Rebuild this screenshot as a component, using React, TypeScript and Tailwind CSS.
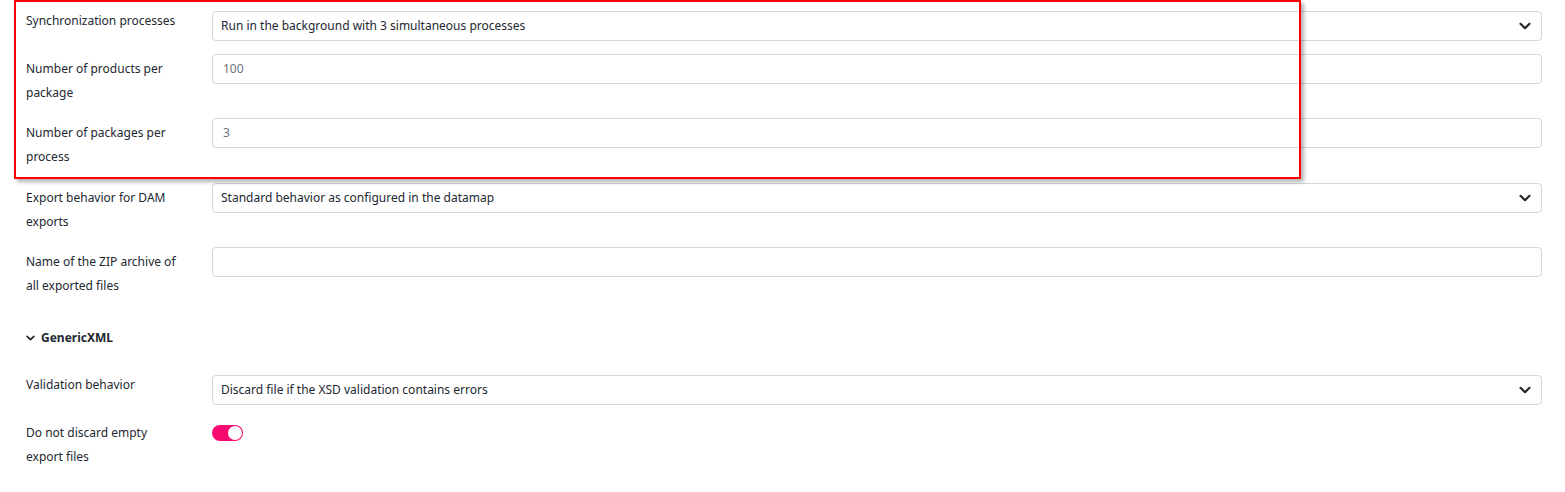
import React from 'react';

const font = { fontFamily: '"Noto Sans", "Open Sans", sans-serif' };

const Chevron: React.FC<{ className?: string }> = ({ className }) => (
  <svg className={className} viewBox="0 0 12 8" fill="none" stroke="currentColor" strokeWidth="2.2" strokeLinecap="round" strokeLinejoin="round">
    <path d="M1.5 1.8 6 6.2l4.5-4.4" />
  </svg>
);

const SelectBox: React.FC<{ value: string }> = ({ value }) => (
  <div className="flex h-[30px] flex-1 items-center justify-between rounded-[4px] border border-[#d4d6d9] bg-white pl-[8px] pr-[10px] text-[12px] text-[#222831]">
    <span>{value}</span>
    <Chevron className="h-[8px] w-[12px] text-[#23272b]" />
  </div>
);

const TextBox: React.FC<{ value?: string }> = ({ value }) => (
  <div className="flex h-[30px] flex-1 items-center rounded-[4px] border border-[#d4d6d9] bg-white pl-[10px] text-[12px] text-[#6b7178]">
    {value}
  </div>
);

const Toggle: React.FC = () => (
  <div className="flex h-[16px] w-[31px] items-center justify-end rounded-full bg-[#f7096f] pr-[1px]">
    <div className="h-[14px] w-[14px] rounded-full bg-white" />
  </div>
);

const Row: React.FC<{ label: React.ReactNode; single?: boolean; className?: string; children: React.ReactNode }> = ({ label, single, className, children }) => (
  <div className={`flex items-start ${className ?? ''}`}>
    <div className={`w-[186px] shrink-0 pr-4 text-[12px] leading-[24px] text-[#222831] ${single ? '-mt-[2px]' : 'pt-[3px]'}`}>{label}</div>
    {children}
  </div>
);

export default function App() {
  return (
    <div className="relative h-[492px] w-full overflow-hidden bg-white" style={font}>
      <div className="pl-[26px] pr-[23px] pt-[11px]">
        <Row label="Synchronization processes" single className="mb-[13px]">
          <SelectBox value="Run in the background with 3 simultaneous processes" />
        </Row>
        <Row label={<>Number of products per<br />package</>} className="mb-[13px]">
          <TextBox value="100" />
        </Row>
        <Row label={<>Number of packages per<br />process</>} className="mb-[14px]">
          <TextBox value="3" />
        </Row>
        <Row label={<>Export behavior for DAM<br />exports</>} className="mb-[13px]">
          <SelectBox value="Standard behavior as configured in the datamap" />
        </Row>
        <Row label={<>Name of the ZIP archive of<br />all exported files</>}>
          <TextBox />
        </Row>

        <div className="mt-[28px] flex h-[24px] items-center gap-[6px] text-[12px] font-bold text-[#222831]">
          <Chevron className="h-[6px] w-[9px] text-[#23272b]" />
          <span>GenericXML</span>
        </div>

        <Row label="Validation behavior" single className="mt-[25px] mb-[13px]">
          <SelectBox value="Discard file if the XSD validation contains errors" />
        </Row>
        <Row label={<>Do not discard empty<br />export files</>}>
          <div className="pt-[7px]">
            <Toggle />
          </div>
        </Row>
      </div>

      <div className="pointer-events-none absolute left-[14px] top-0 h-[179px] w-[1287px] border-2 border-[#ff0000] shadow-[3px_3px_4px_rgba(0,0,0,0.3)]" />
    </div>
  );
}
